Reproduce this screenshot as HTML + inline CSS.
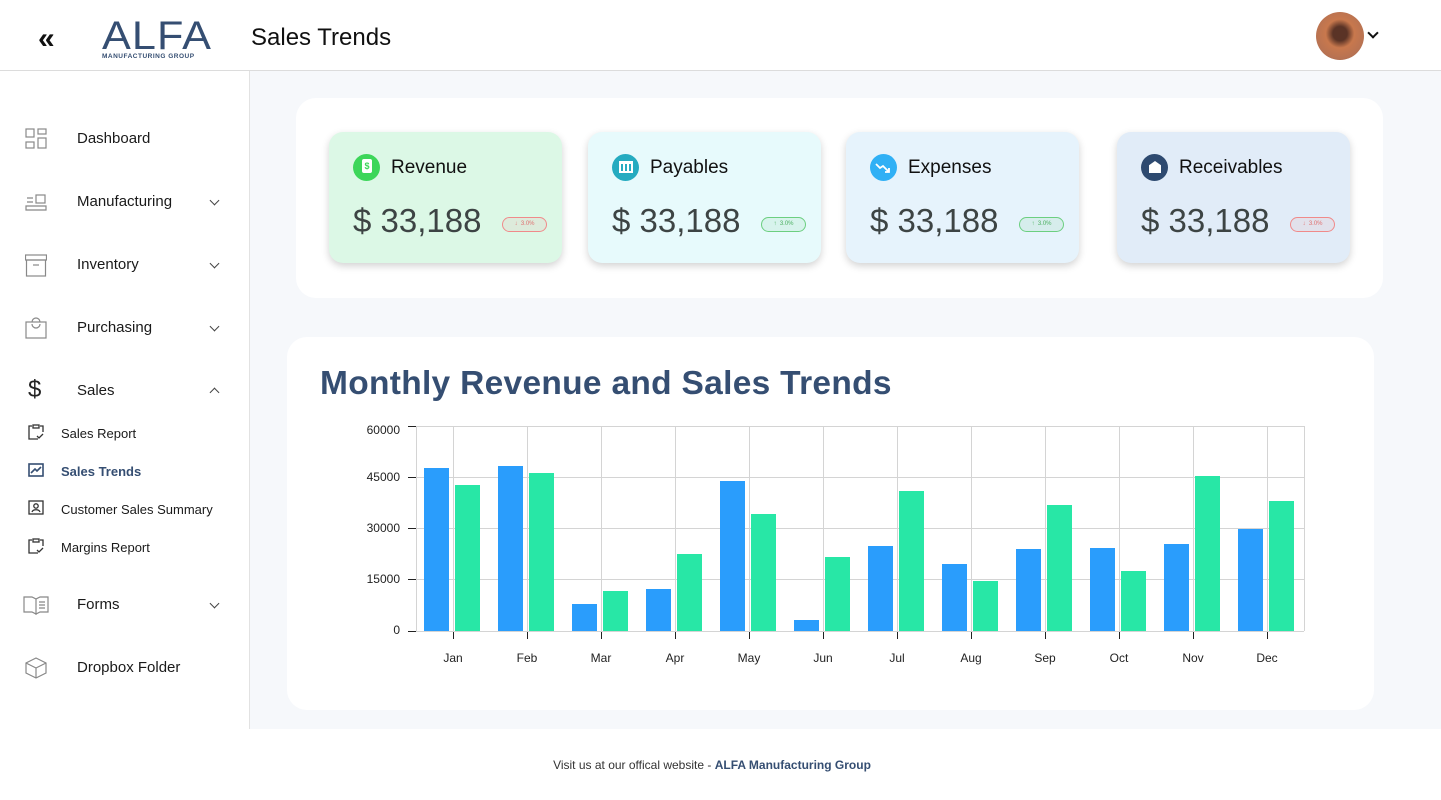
<!DOCTYPE html>
<html><head><meta charset="utf-8"><style>
*{box-sizing:border-box;margin:0;padding:0}
body{width:1441px;height:800px;overflow:hidden;background:#fff;font-family:"Liberation Sans",sans-serif;position:relative;color:#111}
.abs{position:absolute}
.hdr{left:0;top:0;width:1441px;height:71px;border-bottom:1px solid #dcdcdc;background:#fff}
.side{left:0;top:71px;width:250px;height:658px;border-right:1px solid #e2e2e2;background:#fff}
.main{left:250px;top:71px;width:1191px;height:658px;background:#f6f8fb}
.nav{position:absolute;left:77px;font-size:15px;color:#1a1a1a}
.sub{position:absolute;left:61px;font-size:13px;color:#1a1a1a}
.chev{position:absolute;left:211px;width:7px;height:7px;border-right:1.2px solid #444;border-bottom:1.2px solid #444;transform:rotate(45deg)}
.ico{position:absolute;left:25px}
.panel{background:#fff;border-radius:20px}
.card{position:absolute;top:132px;width:233px;height:131px;border-radius:14px;box-shadow:0 3px 8px rgba(0,0,0,.18)}
.card .ci{position:absolute;left:24px;top:22px;width:27px;height:27px;border-radius:50%}
.card .t{position:absolute;left:62px;top:25px;font-size:19px;color:#111}
.card .v{position:absolute;left:24px;top:70px;font-size:33px;color:#3d4444}
.pill{position:absolute;left:173px;top:85px;width:45px;height:15px;border-radius:8px;font-size:6px;text-align:center;line-height:13px}
.dn{border:1px solid #f08a8a;color:#e07070;background:rgba(240,130,130,.1)}
.up{border:1px solid #6ccf80;color:#4cb060;background:rgba(100,200,120,.12)}
</style></head><body>
<div class="abs hdr">
 <div class="abs" style="left:38px;top:22px;font-size:30px;font-weight:bold;color:#111;letter-spacing:-4px">«</div>
 <div class="abs" style="left:102px;top:16px;font-size:40px;color:#354e72;letter-spacing:1px;line-height:40px;transform:scaleX(1.08);transform-origin:left">ALFA</div>
 <div class="abs" style="left:102px;top:53px;font-size:6.5px;color:#354e72;font-weight:bold;letter-spacing:.5px">MANUFACTURING GROUP</div>
 <div class="abs" style="left:251px;top:24px;font-size:24px;color:#111">Sales Trends</div>
 <div class="abs" style="left:1316px;top:12px;width:48px;height:48px;border-radius:50%;background:radial-gradient(circle at 50% 45%,#5a3326 0 20%,#c8784d 40%,#b77252 70%,#7a4a3a)"></div>
 <div class="abs" style="left:1369px;top:29px;width:8px;height:8px;border-right:2px solid #111;border-bottom:2px solid #111;transform:rotate(45deg)"></div>
</div>
<div class="abs side">
 <svg class="ico" style="top:57px" width="22" height="22" fill="none" stroke="#888" stroke-width="1.2"><rect x="1" y="1" width="8" height="8"/><rect x="13" y="1" width="8" height="5"/><rect x="1" y="14" width="8" height="6"/><rect x="13" y="10" width="8" height="10"/></svg>
 <div class="nav" style="top:59px">Dashboard</div>
 <svg class="ico" style="top:120px" width="22" height="22" fill="none" stroke="#888" stroke-width="1.2"><path d="M2 7h6M2 11h6M1 15h20v4H1z"/><rect x="11" y="4" width="9" height="8"/></svg>
 <div class="nav" style="top:122px">Manufacturing</div><div class="chev" style="top:126px"></div>
 <svg class="ico" style="top:183px" width="22" height="24" fill="none" stroke="#888" stroke-width="1.2"><rect x="0.5" y="1" width="21" height="5"/><rect x="1.5" y="6" width="19" height="16"/><path d="M8 11h6"/></svg>
 <div class="nav" style="top:185px">Inventory</div><div class="chev" style="top:189px"></div>
 <svg class="ico" style="top:245px" width="22" height="24" fill="none" stroke="#888" stroke-width="1.2"><rect x="1" y="6" width="20" height="16"/><path d="M7 6a4 4 0 0 1 8 0M7 8a4 4 0 0 0 8 0"/></svg>
 <div class="nav" style="top:248px">Purchasing</div><div class="chev" style="top:252px"></div>
 <div class="abs" style="left:28px;top:305px;font-size:24px;color:#222">$</div>
 <div class="nav" style="top:311px">Sales</div><div class="chev" style="top:318px;transform:rotate(225deg)"></div>
 <svg class="abs" style="left:28px;top:353px" width="16" height="16" fill="none" stroke="#333" stroke-width="1.3"><path d="M4 2H1v13h9M12 2h3v6"/><rect x="5" y="1" width="6" height="3"/><path d="M9 12l2 2 4-4"/></svg>
 <div class="sub" style="top:355px">Sales Report</div>
 <svg class="abs" style="left:28px;top:391px" width="16" height="16" fill="none" stroke="#354e72" stroke-width="1.6"><rect x="1" y="2" width="14" height="12"/><path d="M3 11l4-4 2 2 4-4"/></svg>
 <div class="sub" style="top:393px;font-weight:bold;color:#354e72">Sales Trends</div>
 <svg class="abs" style="left:28px;top:429px" width="16" height="16" fill="none" stroke="#333" stroke-width="1.3"><rect x="1" y="1" width="14" height="13"/><circle cx="8" cy="6" r="2.2"/><path d="M4 12c1-3 7-3 8 0"/></svg>
 <div class="sub" style="top:431px">Customer Sales Summary</div>
 <svg class="abs" style="left:28px;top:467px" width="16" height="16" fill="none" stroke="#333" stroke-width="1.3"><path d="M4 2H1v13h9M12 2h3v6"/><rect x="5" y="1" width="6" height="3"/><path d="M9 12l2 2 4-4"/></svg>
 <div class="sub" style="top:469px">Margins Report</div>
 <svg class="ico" style="top:524px;left:23px" width="26" height="20" fill="none" stroke="#888" stroke-width="1.2"><path d="M1 2h8l4 2v15l-4-2H1zM25 2h-8l-4 2v15l4-2h8z"/><path d="M16 7h6M16 10h6M16 13h6"/></svg>
 <div class="nav" style="top:525px">Forms</div><div class="chev" style="top:529px"></div>
 <svg class="ico" style="top:586px" width="22" height="22" fill="none" stroke="#888" stroke-width="1.2"><path d="M11 1l10 5v10l-10 5L1 16V6zM1 6l10 5 10-5M11 11v10"/></svg>
 <div class="nav" style="top:588px">Dropbox Folder</div>
</div>
<div class="abs main"></div>
<div class="abs panel" style="left:296px;top:98px;width:1087px;height:200px"></div>
<div class="card" style="left:329px;background:#dcf8e6"><div class="ci" style="background:#3dd65a"></div><div class="abs" style="left:33px;top:27px;width:10px;height:14px;background:#fff;border-radius:2px;font-size:9px;color:#3dd65a;text-align:center;font-weight:bold;line-height:14px">$</div><div class="t">Revenue</div><div class="v">$ 33,188</div><div class="pill dn">↓ &nbsp;3.0%</div></div>
<div class="card" style="left:588px;background:#e7fafc"><div class="ci" style="background:#25abc0"></div><div class="abs" style="left:31px;top:29px;width:14px;height:12px;border-top:3px solid #fff;border-bottom:2px solid #fff;background:repeating-linear-gradient(90deg,#fff 0 2px,transparent 2px 4px)"></div><div class="t">Payables</div><div class="v">$ 33,188</div><div class="pill up">↑ &nbsp;3.0%</div></div>
<div class="card" style="left:846px;background:#e6f3fc"><div class="ci" style="background:#30b0f5"></div><svg class="abs" style="left:29px;top:29px" width="16" height="14" fill="none" stroke="#fff" stroke-width="1.8"><path d="M1 3l4 4 3-2 6 6M10 11h4V7"/></svg><div class="t">Expenses</div><div class="v">$ 33,188</div><div class="pill up">↑ &nbsp;3.0%</div></div>
<div class="card" style="left:1117px;background:#e1ecf8"><div class="ci" style="background:#2e4a70"></div><div class="abs" style="left:32px;top:29px;width:12px;height:12px;background:#fff;clip-path:polygon(50% 0,100% 35%,100% 100%,0 100%,0 35%)"></div><div class="t">Receivables</div><div class="v">$ 33,188</div><div class="pill dn">↓ &nbsp;3.0%</div></div>
<div class="abs panel" style="left:287px;top:337px;width:1087px;height:373px"></div>
<div class="abs" style="left:320px;top:365px;font-size:33.5px;font-weight:bold;color:#354e72;letter-spacing:.3px">Monthly Revenue and Sales Trends</div>
<svg class="abs" style="left:0;top:0" width="1441" height="800" font-family="Liberation Sans,sans-serif" font-size="12" fill="#222">
<g stroke="#d4d4d4" stroke-width="1">
<line x1="416" y1="426.5" x2="1304" y2="426.5"/><line x1="416" y1="477.5" x2="1304" y2="477.5"/><line x1="416" y1="528.5" x2="1304" y2="528.5"/><line x1="416" y1="579.5" x2="1304" y2="579.5"/><line x1="416" y1="631.5" x2="1304" y2="631.5"/>
<line x1="416.5" y1="426" x2="416.5" y2="631"/><line x1="1304.5" y1="426" x2="1304.5" y2="631"/>
<line x1="453.5" y1="426" x2="453.5" y2="631"/><line x1="527.5" y1="426" x2="527.5" y2="631"/><line x1="601.5" y1="426" x2="601.5" y2="631"/><line x1="675.5" y1="426" x2="675.5" y2="631"/><line x1="749.5" y1="426" x2="749.5" y2="631"/><line x1="823.5" y1="426" x2="823.5" y2="631"/><line x1="897.5" y1="426" x2="897.5" y2="631"/><line x1="971.5" y1="426" x2="971.5" y2="631"/><line x1="1045.5" y1="426" x2="1045.5" y2="631"/><line x1="1119.5" y1="426" x2="1119.5" y2="631"/><line x1="1193.5" y1="426" x2="1193.5" y2="631"/><line x1="1267.5" y1="426" x2="1267.5" y2="631"/>
</g>
<g stroke="#222"><line x1="408" y1="426.5" x2="416" y2="426.5"/><line x1="408" y1="477.5" x2="416" y2="477.5"/><line x1="408" y1="528.5" x2="416" y2="528.5"/><line x1="408" y1="579.5" x2="416" y2="579.5"/><line x1="408" y1="631.5" x2="416" y2="631.5"/>
<line x1="453.5" y1="632" x2="453.5" y2="639"/><line x1="527.5" y1="632" x2="527.5" y2="639"/><line x1="601.5" y1="632" x2="601.5" y2="639"/><line x1="675.5" y1="632" x2="675.5" y2="639"/><line x1="749.5" y1="632" x2="749.5" y2="639"/><line x1="823.5" y1="632" x2="823.5" y2="639"/><line x1="897.5" y1="632" x2="897.5" y2="639"/><line x1="971.5" y1="632" x2="971.5" y2="639"/><line x1="1045.5" y1="632" x2="1045.5" y2="639"/><line x1="1119.5" y1="632" x2="1119.5" y2="639"/><line x1="1193.5" y1="632" x2="1193.5" y2="639"/><line x1="1267.5" y1="632" x2="1267.5" y2="639"/></g>
<g text-anchor="end"><text x="400" y="434">60000</text><text x="400" y="481">45000</text><text x="400" y="532">30000</text><text x="400" y="583">15000</text><text x="400" y="634">0</text></g>
<g fill="#2a9dfc">
<rect x="424" y="468" width="25" height="163"/><rect x="498" y="466" width="25" height="165"/><rect x="572" y="604" width="25" height="27"/><rect x="646" y="589" width="25" height="42"/><rect x="720" y="481" width="25" height="150"/><rect x="794" y="620" width="25" height="11"/><rect x="868" y="546" width="25" height="85"/><rect x="942" y="564" width="25" height="67"/><rect x="1016" y="549" width="25" height="82"/><rect x="1090" y="548" width="25" height="83"/><rect x="1164" y="544" width="25" height="87"/><rect x="1238" y="529" width="25" height="102"/>
</g>
<g fill="#28e7a6">
<rect x="455" y="485" width="25" height="146"/><rect x="529" y="473" width="25" height="158"/><rect x="603" y="591" width="25" height="40"/><rect x="677" y="554" width="25" height="77"/><rect x="751" y="514" width="25" height="117"/><rect x="825" y="557" width="25" height="74"/><rect x="899" y="491" width="25" height="140"/><rect x="973" y="581" width="25" height="50"/><rect x="1047" y="505" width="25" height="126"/><rect x="1121" y="571" width="25" height="60"/><rect x="1195" y="476" width="25" height="155"/><rect x="1269" y="501" width="25" height="130"/>
</g>
<g text-anchor="middle"><text x="453" y="662">Jan</text><text x="527" y="662">Feb</text><text x="601" y="662">Mar</text><text x="675" y="662">Apr</text><text x="749" y="662">May</text><text x="823" y="662">Jun</text><text x="897" y="662">Jul</text><text x="971" y="662">Aug</text><text x="1045" y="662">Sep</text><text x="1119" y="662">Oct</text><text x="1193" y="662">Nov</text><text x="1267" y="662">Dec</text></g>
</svg>
<div class="abs" style="left:0;top:758px;width:1424px;text-align:center;font-size:12px;color:#333">Visit us at our offical website - <b style="color:#354e72">ALFA Manufacturing Group</b></div>
</body></html>
